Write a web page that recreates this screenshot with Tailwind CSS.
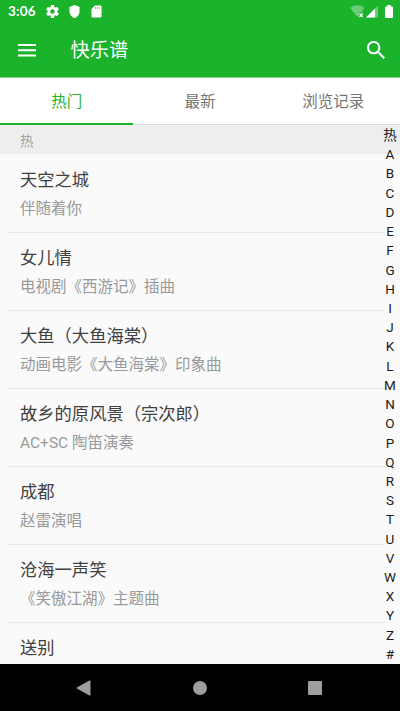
<!DOCTYPE html>
<html lang="zh-CN">
<head>
<meta charset="utf-8">
<meta name="viewport" content="width=device-width, initial-scale=1">
<title>快乐谱</title>
<script src="https://cdn.jsdelivr.net/npm/@tailwindcss/browser@4"></script>
</head>
<body class="h-[711px] w-[400px] overflow-hidden bg-[#fafafa] font-[Roboto,'Noto_Sans_CJK_SC',sans-serif]">
<div class="relative flex h-[711px] flex-col overflow-hidden">
  <header class="h-[78px] shrink-0 border-b border-[#8fd294] bg-[#1bb22c] text-white">
    <div class="flex h-[23px] items-center pl-2 pr-[7px]">
      <span class="w-[39px] font-[Lato,sans-serif] text-[13.5px] font-bold leading-[23px] tracking-[0.2px]">3:06</span>
      <svg class="-ml-[1px] size-[13px]" viewBox="2 2 20 20" fill="currentColor"><path d="M19.43 12.98c.04-.32.07-.64.07-.98s-.03-.66-.07-.98l2.11-1.65c.19-.15.24-.42.12-.64l-2-3.46c-.12-.22-.39-.3-.61-.22l-2.49 1c-.52-.4-1.08-.73-1.69-.98l-.38-2.65C14.46 2.18 14.25 2 14 2h-4c-.25 0-.46.18-.49.42l-.38 2.65c-.61.25-1.17.59-1.69.98l-2.49-1c-.23-.09-.49 0-.61.22l-2 3.46c-.13.22-.07.49.12.64l2.11 1.65c-.04.32-.07.65-.07.98s.03.66.07.98l-2.11 1.65c-.19.15-.24.42-.12.64l2 3.46c.12.22.39.3.61.22l2.49-1c.52.4 1.08.73 1.69.98l.38 2.65c.03.24.24.42.49.42h4c.25 0 .46-.18.49-.42l.38-2.65c.61-.25 1.17-.59 1.69-.98l2.49 1c.23.09.49 0 .61-.22l2-3.46c.12-.22.07-.49-.12-.64l-2.11-1.65zM12 15.5c-1.93 0-3.5-1.57-3.5-3.5s1.57-3.5 3.5-3.5 3.5 1.57 3.5 3.5-1.57 3.5-3.5 3.5z"/></svg>
      <svg class="ml-[9px] h-[13px] w-[13px]" viewBox="1 1 22 22" fill="currentColor"><path d="M12 1 3.500 4.500v7c0 5.300 3.600 10 8.500 11.500 4.900-1.500 8.500-6.200 8.500-11.500v-7z"/></svg>
      <svg class="ml-[10px] h-[13px] w-[11px]" viewBox="0 0 11 13"><path fill="currentColor" d="M4 .5h5.500q1 0 1 1v10q0 1-1 1h-8q-1 0-1-1V4z"/><path stroke="#1bb22c" stroke-opacity=".7" stroke-width=".8" d="M4.500 2v2M6.500 2v2M8.500 2v2"/></svg>
      <span class="flex-1"></span>
      <svg class="h-[14px] w-[15px]" viewBox="0 0 15 14"><path fill="#fff" fill-opacity=".35" d="M0 2.700Q7.200-2.200 14.500 2.700L11.500 7.200H9V11.500H7z"/><path stroke="#fff" stroke-width="1.300" d="m9.500 8.500 3.200 3.500m0-3.500L9.500 12"/></svg>
      <svg class="ml-[1px] h-[13px] w-[12px]" viewBox="0 0 12 13"><path fill="#fff" fill-opacity=".35" d="M12 .5v12H0z"/><path fill="#fff" d="M9 3.500v9H0z"/></svg>
      <svg class="ml-[7px] h-[13px] w-[8px]" viewBox="0 0 8 13" fill="currentColor"><path d="M2.300 0h3.400v1.500H7q1 0 1 1V12q0 1-1 1H1q-1 0-1-1V2.500q0-1 1-1h1.300z"/></svg>
    </div>
    <div class="flex h-[54px] items-center pl-[18px] pr-[15px]">
      <svg class="h-[14px] w-[18px]" viewBox="0 0 18 14" fill="currentColor"><path d="M0 1h18v2H0zM0 6.200h18v2H0zM0 11.400h18v2H0z"/></svg>
      <h1 class="ml-[34.500px] pt-[2px] text-[19.300px] font-normal leading-[54px]">快乐谱</h1>
      <svg class="ml-auto size-[18px]" viewBox="3 3 17.500 17.500" fill="currentColor"><path d="M15.500 14h-.79l-.28-.27C15.410 12.590 16 11.110 16 9.500 16 5.910 13.090 3 9.500 3S3 5.910 3 9.500 5.910 16 9.500 16c1.610 0 3.090-.59 4.230-1.570l.27.28v.79l5 4.990L20.490 19l-4.990-5zm-6 0C7.010 14 5 11.990 5 9.500S7.010 5 9.500 5 14 7.010 14 9.500 11.990 14 9.500 14z"/></svg>
    </div>
  </header>
  <nav class="grid h-[47px] shrink-0 grid-cols-3 border-b border-[#dcdcdc] bg-white text-center text-[15.500px] leading-[48px] text-[#757575]">
    <a class="-mb-px h-[47px] border-b-2 border-[#1bb22c] text-[#1bb22c]">热门</a>
    <a>最新</a>
    <a>浏览记录</a>
  </nav>
  <main class="flex-1 overflow-hidden">
    <h2 class="h-[29px] bg-[#eeeeee] pl-5 text-[13.500px] font-normal leading-[33px] text-[#a0a0a0]">热</h2>
    <ul class="pl-2 pr-[15px] text-[15.500px] text-[#999]">
      <li class="h-[79px] border-b border-[#e8e8e8] pl-3 pt-[13px]"><h3 class="text-[17.300px] leading-[27px] text-[#404040]">天空之城</h3><p class="leading-[31px]">伴随着你</p></li>
      <li class="h-[78px] border-b border-[#e8e8e8] pl-3 pt-3"><h3 class="text-[17.300px] leading-[27px] text-[#404040]">女儿情</h3><p class="leading-[31px]">电视剧《西游记》插曲</p></li>
      <li class="h-[78px] border-b border-[#e8e8e8] pl-3 pt-3"><h3 class="text-[17.300px] leading-[27px] text-[#404040]">大鱼（大鱼海棠）</h3><p class="leading-[31px]">动画电影《大鱼海棠》印象曲</p></li>
      <li class="h-[78px] border-b border-[#e8e8e8] pl-3 pt-3"><h3 class="text-[17.300px] leading-[27px] text-[#404040]">故乡的原风景（宗次郎）</h3><p class="leading-[31px]">AC+SC 陶笛演奏</p></li>
      <li class="h-[78px] border-b border-[#e8e8e8] pl-3 pt-3"><h3 class="text-[17.300px] leading-[27px] text-[#404040]">成都</h3><p class="leading-[31px]">赵雷演唱</p></li>
      <li class="h-[78px] border-b border-[#e8e8e8] pl-3 pt-3"><h3 class="text-[17.300px] leading-[27px] text-[#404040]">沧海一声笑</h3><p class="leading-[31px]">《笑傲江湖》主题曲</p></li>
      <li class="pl-3 pt-3"><h3 class="text-[17.300px] leading-[27px] text-[#404040]">送别</h3></li>
    </ul>
  </main>
  <footer class="flex h-[47px] shrink-0 items-center bg-black text-[#9e9e9e]">
    <svg class="ml-[76px] h-4 w-[15px]" viewBox="0 0 15 16" fill="currentColor"><path d="M14.500 1v14q0 1-1 .6L.8 8.600q-.8-.6 0-1.200L13.500.4q1-.4 1 .6z"/></svg>
    <span class="ml-[102px] size-[14px] rounded-full bg-[#9e9e9e]"></span>
    <span class="ml-[101px] size-[14px] rounded-[1px] bg-[#9e9e9e]"></span>
  </footer>
  <aside class="absolute right-0 top-[126px] flex h-[538px] w-5 flex-col text-center text-[13.500px] leading-[19.220px] text-[#1a1a1a]">
    <span>热</span><span>A</span><span>B</span><span>C</span><span>D</span><span>E</span><span>F</span><span>G</span><span>H</span><span>I</span><span>J</span><span>K</span><span>L</span><span>M</span><span>N</span><span>O</span><span>P</span><span>Q</span><span>R</span><span>S</span><span>T</span><span>U</span><span>V</span><span>W</span><span>X</span><span>Y</span><span>Z</span><span>#</span>
  </aside>
</div>
</body>
</html>
